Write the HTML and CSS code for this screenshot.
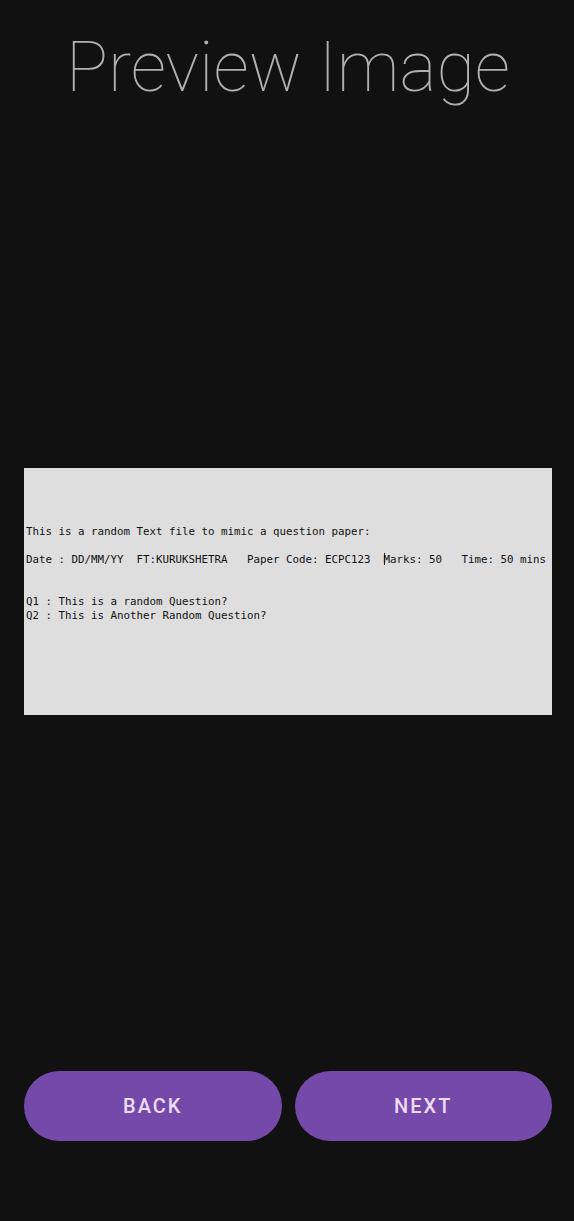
FILE: index.html
```html
<!DOCTYPE html>
<html>
<head>
<meta charset="utf-8">
<link rel="stylesheet" href="styles.css">
</head>
<body>
<div class="screen">
  <h1 class="title">Preview Image</h1>
  <div class="preview-area">
    <div class="doc">
      <div class="doc-line">This is a random Text file to mimic a question paper:</div>
      <div class="doc-line gap-1">Date : DD/MM/YY  FT:KURUKSHETRA   Paper Code: ECPC123  <span class="cursor"></span>Marks: 50   Time: 50 mins</div>
      <div class="doc-line gap-2">Q1 : This is a random Question?</div>
      <div class="doc-line">Q2 : This is Another Random Question?</div>
    </div>
  </div>
  <div class="actions">
    <button class="btn">BACK</button>
    <button class="btn">NEXT</button>
  </div>
</div>
</body>
</html>
```
FILE: styles.css
```css
html, body {
  margin: 0;
  padding: 0;
  background: #111111;
}
.screen {
  width: 574px;
  height: 1221px;
  display: flex;
  flex-direction: column;
  box-sizing: border-box;
  padding: 0 22px 0 24px;
}
.title {
  margin: 22px 0 0 0;
  font-family: Roboto, "Liberation Sans", sans-serif;
  font-weight: 100;
  font-size: 70px;
  line-height: 90px;
  color: #b0b0b0;
  text-align: center;
}
.preview-area {
  flex: 1;
  display: flex;
  align-items: center;
}
.doc {
  margin-top: -1px;
  width: 528px;
  height: 247px;
  background: #dedede;
  box-sizing: border-box;
  padding: 57px 0 0 2px;
}
.doc-line {
  white-space: pre;
  font-family: "DejaVu Sans Mono", "Liberation Mono", monospace;
  font-size: 10.8px;
  line-height: 14px;
  color: #111111;
}
.gap-1 {
  margin-top: 14px;
}
.gap-2 {
  margin-top: 28px;
}
.cursor {
  display: inline-block;
  width: 1px;
  height: 12px;
  margin-right: -1px;
  background: #222;
  vertical-align: -2px;
}
.actions {
  display: flex;
  gap: 13px;
  margin-bottom: 80px;
}
.btn {
  flex: 1;
  height: 70px;
  border: none;
  border-radius: 35px;
  background: #7549aa;
  color: #ecdcf6;
  font-family: Roboto, "Liberation Sans", sans-serif;
  font-weight: 500;
  font-size: 20px;
  letter-spacing: 2px;
  padding: 0;
}
```
